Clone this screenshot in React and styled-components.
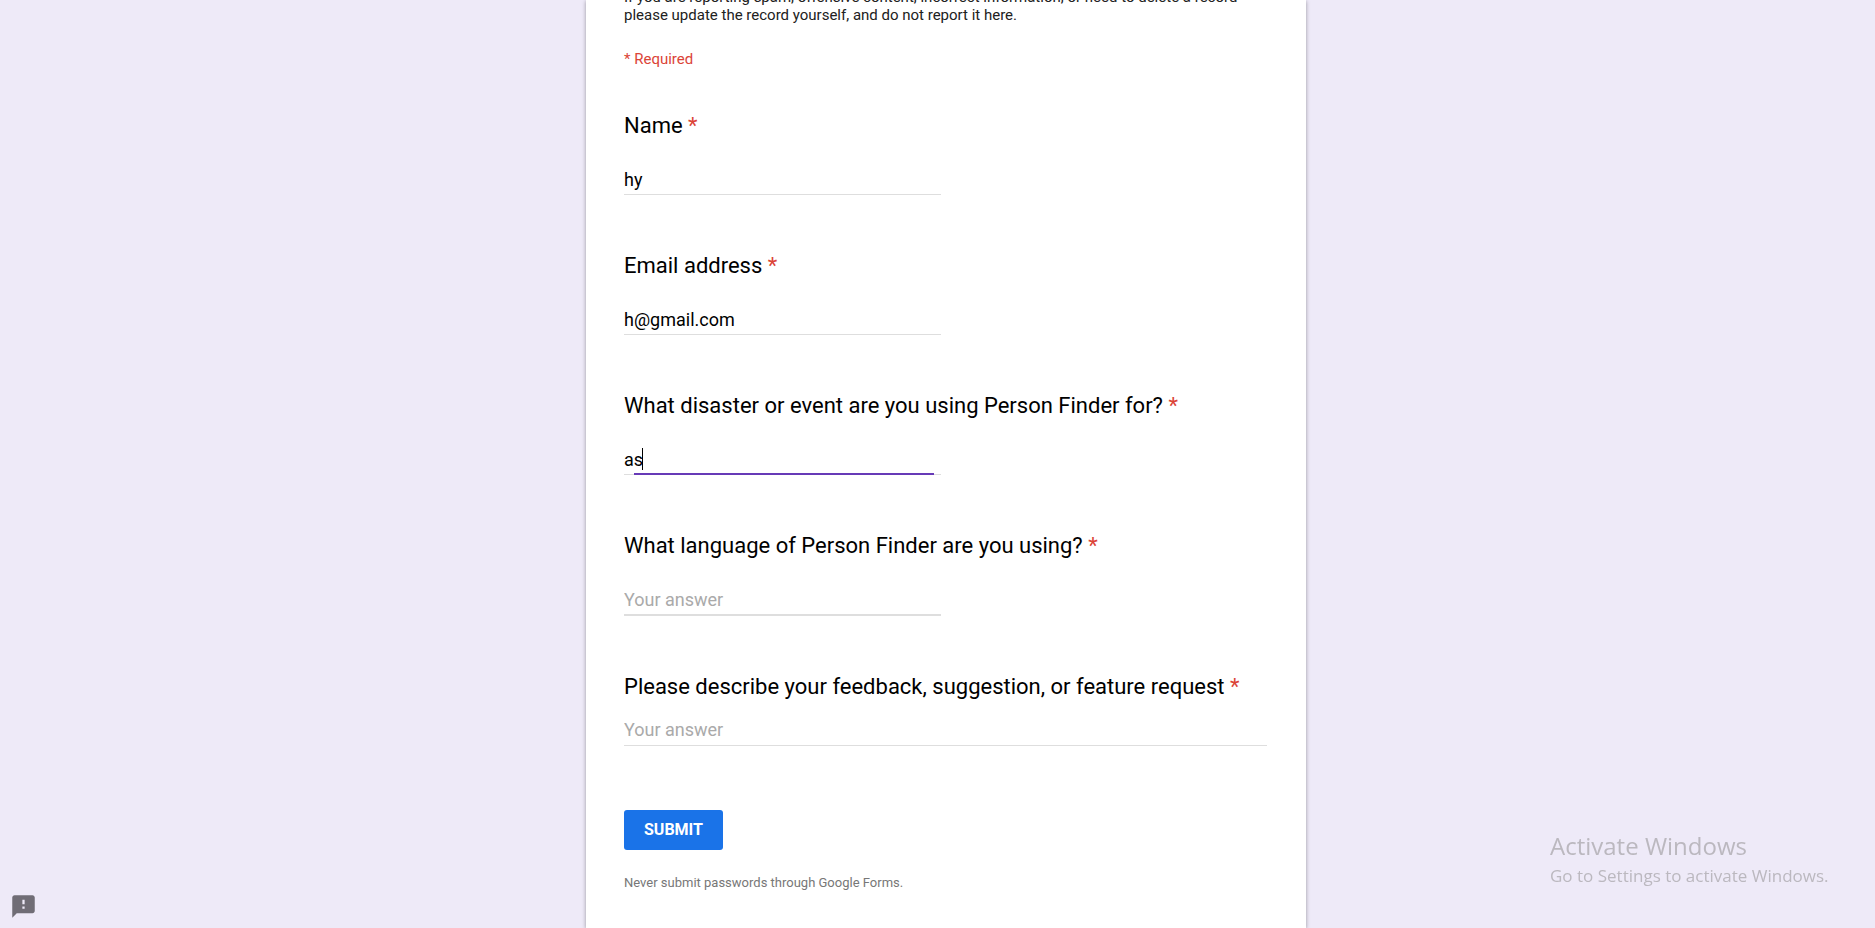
import React from "react";
import styled, { createGlobalStyle, css } from "styled-components";
import { MdFeedback } from "react-icons/md";

const GlobalStyle = createGlobalStyle`
  *, *::before, *::after { box-sizing: border-box; }
  body {
    margin: 0;
    background: #eeeaf8;
    color: #000;
    font-family: Roboto, Arial, sans-serif;
  }
`;

const Page = styled.div`
  display: flex;
  justify-content: center;
  min-height: 100vh;
  padding-left: 17px;
  overflow: hidden;
`;

const Card = styled.main`
  width: 100%;
  max-width: 720px;
  padding: 0 39px 32px 38px;
  background: #fff;
  box-shadow: 0 1px 4px rgba(0, 0, 0, 0.37);
`;

const Intro = styled.header`
  display: flex;
  flex-direction: column;
  justify-content: flex-end;
  height: 24px;
  overflow: hidden;
`;

const Description = styled.p`
  flex: none;
  margin: 0;
  font-size: 15px;
  line-height: 18px;
  color: #212121;
`;

const RequiredNote = styled.p`
  margin: 25px 0 42px;
  font-size: 15px;
  line-height: 20px;
  color: #db4437;
`;

const Form = styled.form`
  display: flex;
  flex-direction: column;
  align-items: flex-start;
`;

const Question = styled.div`
  display: flex;
  flex-direction: column;
  gap: ${(p) => (p.$long ? 15 : 25)}px;
  width: 100%;
  margin-bottom: ${(p) => (p.$long ? 64 : 56)}px;
`;

const Title = styled.label`
  font-size: 22px;
  line-height: 30px;
`;

const Star = styled.span`
  color: #db4437;
`;

const fieldText = css`
  display: block;
  width: 100%;
  height: 28px;
  margin: 0;
  padding: 0 0 2px;
  border: 0;
  outline: 0;
  background: transparent;
  color: #000;
  font: 400 18px/26px Roboto, Arial, sans-serif;
  &::placeholder {
    color: #aaa;
    opacity: 1;
  }
`;

const FieldBox = styled.div`
  position: relative;
  width: ${(p) => (p.$long ? "100%" : "317px")};
  border-bottom: ${(p) => (p.$thick ? 2 : 1)}px solid #dedede;
  ${(p) =>
    p.$active &&
    css`
      &::after {
        content: "";
        position: absolute;
        left: 10px;
        right: 7px;
        bottom: -1px;
        height: 2px;
        background: #673ab7;
      }
    `}
`;

const TextInput = styled.input`
  ${fieldText}
  caret-color: transparent;
`;

const TextArea = styled.textarea`
  ${fieldText}
  resize: none;
  overflow: hidden;
`;

const Caret = styled.span`
  position: absolute;
  left: 18px;
  top: 2px;
  width: 1px;
  height: 22px;
  background: #000;
`;

const SubmitButton = styled.button`
  height: 40px;
  padding: 0 20px;
  border: 0;
  border-radius: 3px;
  background: #1a73e8;
  color: #fff;
  font: 700 16px/40px Roboto, Arial, sans-serif;
  text-transform: uppercase;
`;

const FootNote = styled.p`
  margin: 23px 0 0;
  font-size: 13px;
  line-height: 20px;
  color: #777;
`;

const FeedbackButton = styled.button`
  position: fixed;
  left: 10px;
  bottom: 8px;
  display: flex;
  padding: 0;
  border: 0;
  background: transparent;
  color: #706d76;
`;

const Watermark = styled.aside`
  position: fixed;
  right: 42px;
  bottom: 40px;
  display: flex;
  flex-direction: column;
  gap: 2px;
  width: 283px;
  color: #bbb8bf;
  font-family: "Segoe UI", "Open Sans", sans-serif;
  white-space: nowrap;
  pointer-events: none;
`;

const WatermarkTitle = styled.div`
  font-size: 24px;
  line-height: 32px;
`;

const WatermarkText = styled.div`
  font-size: 17px;
  line-height: 24px;
`;

const questions = [
  { id: "name", title: "Name", value: "hy" },
  { id: "email", title: "Email address", value: "h@gmail.com", type: "email" },
  { id: "event", title: "What disaster or event are you using Person Finder for?", value: "as", active: true },
  { id: "language", title: "What language of Person Finder are you using?", thick: true },
  { id: "feedback", title: "Please describe your feedback, suggestion, or feature request", long: true },
];

function QuestionItem({ id, title, value, type = "text", active, thick, long }) {
  return (
    <Question $long={long}>
      <Title htmlFor={id}>
        {title} <Star>*</Star>
      </Title>
      <FieldBox $long={long} $thick={thick} $active={active}>
        {long ? (
          <TextArea id={id} rows={1} placeholder="Your answer" required />
        ) : (
          <TextInput id={id} type={type} defaultValue={value} placeholder="Your answer" required />
        )}
        {active && <Caret />}
      </FieldBox>
    </Question>
  );
}

export default function App() {
  return (
    <>
      <GlobalStyle />
      <Page>
        <Card>
          <Intro>
            <Description>
              If you are reporting spam, offensive content, incorrect information, or need to delete a record
              <br />
              please update the record yourself, and do not report it here.
            </Description>
          </Intro>
          <RequiredNote>* Required</RequiredNote>
          <Form onSubmit={(e) => e.preventDefault()}>
            {questions.map((q) => (
              <QuestionItem key={q.id} {...q} />
            ))}
            <SubmitButton type="submit">Submit</SubmitButton>
          </Form>
          <FootNote>Never submit passwords through Google Forms.</FootNote>
        </Card>
      </Page>
      <FeedbackButton type="button" aria-label="Report a problem">
        <MdFeedback size={27} />
      </FeedbackButton>
      <Watermark>
        <WatermarkTitle>Activate Windows</WatermarkTitle>
        <WatermarkText>Go to Settings to activate Windows.</WatermarkText>
      </Watermark>
    </>
  );
}
